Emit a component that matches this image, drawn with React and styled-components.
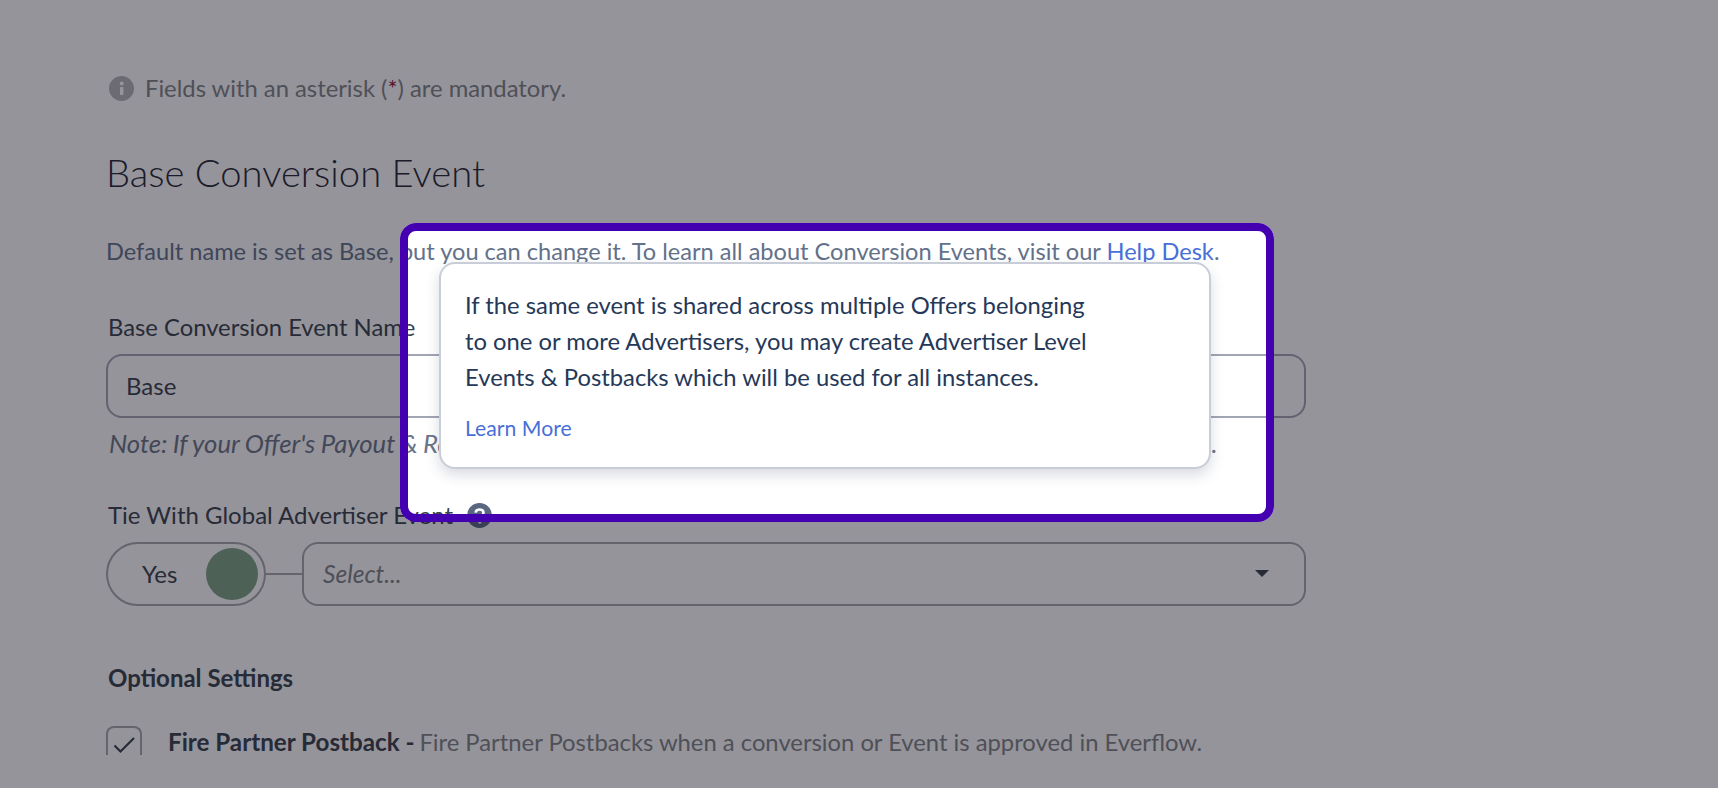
import React from "react";
import styled, { createGlobalStyle } from "styled-components";

const Global = createGlobalStyle`
  html, body {
    margin: 0;
    padding: 0;
    height: 100%;
    overflow: hidden;
    background: #fff;
  }
  body {
    font-family: "Lato", "Liberation Sans", sans-serif;
    color: #253858;
  }
`;

const Page = styled.div`
  position: relative;
  width: 1718px;
  height: 788px;
  overflow: hidden;
`;

const Content = styled.div`
  width: 1306px;
  padding: 73px 0 0 106px;
`;

const Notice = styled.div`
  display: flex;
  align-items: center;
  gap: 11px;
  height: 30px;
  padding-left: 3px;
  font-size: 23.8px;
  color: #7f8488;
`;

const Star = styled.span`
  color: #8f1b3a;
`;

const Title = styled.h2`
  margin: 46px 0 0;
  font-size: 38.2px;
  line-height: 46px;
  font-weight: 300;
  color: #1f2533;
`;

const Lead = styled.p`
  margin: 41px 0 0;
  font-size: 23.6px;
  line-height: 30px;
  color: #63718a;
`;

const Link = styled.a`
  color: #4a6fd8;
  text-decoration: none;
`;

const Label = styled.label`
  display: flex;
  align-items: center;
  gap: 14px;
  margin-top: ${({ $top }) => $top || 0}px;
  padding-left: 2px;
  font-size: ${({ $size }) => $size || 24}px;
  line-height: 30px;
  color: #37404b;
`;

const Field = styled.div`
  box-sizing: border-box;
  width: 1200px;
  height: 64px;
  margin-top: 12px;
  padding: 0 0 2px 18px;
  display: flex;
  align-items: center;
  border: 2px solid #a2a5b4;
  border-radius: 16px;
  font-size: 24px;
  color: #37404b;
`;

const Hint = styled.p`
  margin: 10px 0 42px;
  padding-left: 3px;
  font-size: 25.7px;
  line-height: 30px;
  font-style: italic;
  word-spacing: -0.6px;
  white-space: nowrap;
  color: #6b7488;
`;

const TieRow = styled.div`
  display: flex;
  align-items: center;
  width: 1200px;
  margin-top: 12px;
`;

const Toggle = styled.div`
  box-sizing: border-box;
  width: 160px;
  height: 64px;
  flex: none;
  display: flex;
  align-items: center;
  justify-content: space-between;
  padding: 0 6px 2px 34px;
  border: 2px solid #a8a8ac;
  border-radius: 32px;
  font-size: 24px;
  color: #37404b;
`;

const Knob = styled.span`
  width: 52px;
  height: 52px;
  margin-top: 2px;
  border-radius: 50%;
  background: #7da384;
`;

const Connector = styled.span`
  flex: none;
  width: 36px;
  height: 2px;
  background: #a8a8ac;
`;

const Select = styled.div`
  box-sizing: border-box;
  flex: 1;
  height: 64px;
  display: flex;
  align-items: center;
  justify-content: space-between;
  padding: 0 35px 2px 19px;
  border: 2px solid #a8a8ac;
  border-radius: 16px;
  font-size: 24.6px;
  font-style: italic;
  color: #7f8488;
`;

const Caret = styled.span`
  width: 0;
  height: 0;
  border-left: 7px solid transparent;
  border-right: 7px solid transparent;
  border-top: 7px solid #37404b;
`;

const Section = styled.h3`
  margin: 57px 0 0 2px;
  font-size: 24px;
  line-height: 30px;
  font-weight: 700;
  color: #37404b;
`;

const OptionRow = styled.div`
  display: flex;
  align-items: flex-start;
  gap: 26px;
  margin-top: 33px;
  font-size: 23.8px;
  line-height: 32px;
  color: #7f8488;
`;

// the screenshot cuts the page off at y=755, through this checkbox
const Check = styled.span`
  box-sizing: border-box;
  flex: none;
  width: 36px;
  height: 29px;
  padding-top: 7px;
  display: flex;
  justify-content: center;
  border: 2px solid #a8a8ac;
  border-bottom: none;
  border-radius: 8px 8px 0 0;
  color: #37404b;
`;

const Strong = styled.strong`
  margin-right: -1px;
  font-size: 24.2px;
  font-weight: 700;
  color: #37404b;
`;

const Spot = styled.div`
  position: absolute;
  left: 400px;
  top: 223px;
  box-sizing: border-box;
  width: 874px;
  height: 299px;
  padding: 31px 55px 0 31px;
  border: 8px solid #4400b0;
  border-radius: 16px;
  box-shadow: 0 0 0 2000px rgba(20, 18, 30, 0.45);
`;

const Tooltip = styled.div`
  box-sizing: border-box;
  height: 207px;
  padding: 23px 24px 0;
  background: #fff;
  border: 2px solid #c9cdd8;
  border-radius: 16px;
  box-shadow: 0 6px 14px rgba(37, 56, 88, 0.18);
  font-size: 23.8px;
  line-height: 36px;
  color: #253858;
`;

const More = styled(Link)`
  display: block;
  margin-top: 18px;
  font-size: 21.2px;
  line-height: 30px;
`;

function InfoIcon() {
  return (
    <svg width="25" height="25" viewBox="0 0 25 25">
      <circle cx="12.5" cy="12.5" r="12.5" fill="#b4b5ba" />
      <rect x="11" y="11" width="3.4" height="8" rx="0.6" fill="#fff" />
      <circle cx="12.7" cy="7.4" r="2" fill="#fff" />
    </svg>
  );
}

function HelpIcon() {
  return (
    <svg width="25" height="25" viewBox="0 0 25 25">
      <circle cx="12.5" cy="12.5" r="12.5" fill="#596680" />
      <path d="M8.6 9.6c.3-2 1.9-3.1 4-3.1 2.2 0 3.9 1.3 3.9 3.3 0 1.5-.9 2.3-2 3-.9.6-1.3 1-1.3 2v.5" fill="none" stroke="#fff" strokeWidth="2.6" />
      <circle cx="12.8" cy="19" r="1.7" fill="#fff" />
    </svg>
  );
}

function CheckMark() {
  return (
    <svg width="24" height="20" viewBox="0 0 24 20">
      <path d="M2.5 10.5l6 6L22 3" fill="none" stroke="currentColor" strokeWidth="2.2" />
    </svg>
  );
}

export default function App() {
  return (
    <Page>
      <Global />
      <Content>
        <Notice>
          <InfoIcon />
          <span>
            Fields with an asterisk (<Star>*</Star>) are mandatory.
          </span>
        </Notice>
        <Title>Base Conversion Event</Title>
        <Lead>
          Default name is set as Base, but you can change it. To learn all about Conversion Events, visit our{" "}
          <Link>Help Desk</Link>.
        </Lead>
        <Label $top={46} $size={23.8}>Base Conversion Event Name</Label>
        <Field>Base</Field>
        <Hint>Note: If your Offer's Payout &amp; Revenue is not based on this event, you can change it at any time from here.</Hint>
        <Label>
          Tie With Global Advertiser Event
          <HelpIcon />
        </Label>
        <TieRow>
          <Toggle>
            Yes
            <Knob />
          </Toggle>
          <Connector />
          <Select>
            Select...
            <Caret />
          </Select>
        </TieRow>
        <Section>Optional Settings</Section>
        <OptionRow>
          <Check>
            <CheckMark />
          </Check>
          <span>
            <Strong>Fire Partner Postback - </Strong>
            Fire Partner Postbacks when a conversion or Event is approved in Everflow.
          </span>
        </OptionRow>
      </Content>
      <Spot>
        <Tooltip>
          If the same event is shared across multiple Offers belonging
          <br />
          to one or more Advertisers, you may create Advertiser Level
          <br />
          Events &amp; Postbacks which will be used for all instances.
          <More>Learn More</More>
        </Tooltip>
      </Spot>
    </Page>
  );
}
